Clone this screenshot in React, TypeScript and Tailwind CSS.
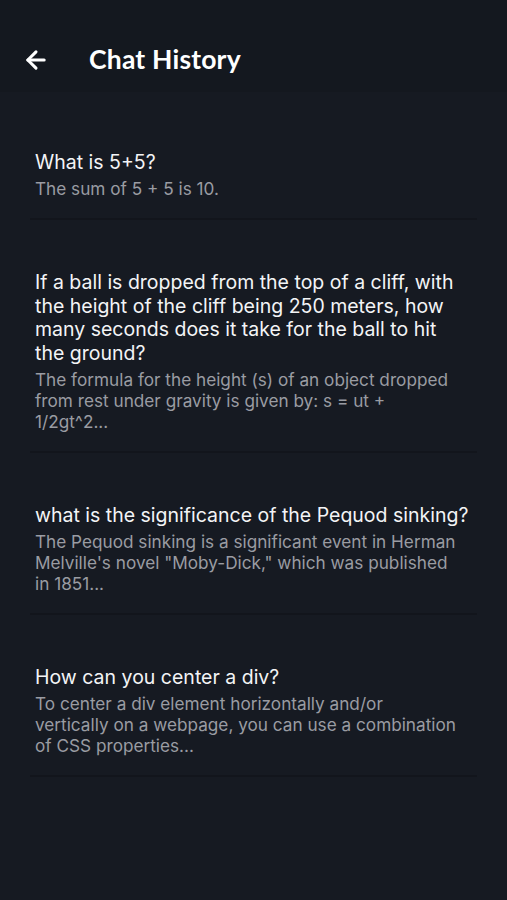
import { ArrowLeft } from "lucide-react";

interface ChatItem {
  question: string;
  answer: string;
}

const chats: ChatItem[] = [
  { question: "What is 5+5?", answer: "The sum of 5 + 5 is 10." },
  {
    question:
      "If a ball is dropped from the top of a cliff, with the height of the cliff being 250 meters, how many seconds does it take for the ball to hit the ground?",
    answer:
      "The formula for the height (s) of an object dropped from rest under gravity is given by: s = ut + 1/2gt^2...",
  },
  {
    question: "what is the significance of the Pequod sinking?",
    answer:
      'The Pequod sinking is a significant event in Herman Melville\'s novel "Moby-Dick," which was published in 1851...',
  },
  {
    question: "How can you center a div?",
    answer:
      "To center a div element horizontally and/or vertically on a webpage, you can use a combination of CSS properties...",
  },
];

export default function App() {
  return (
    <div className="min-h-[900px] bg-[#161a22] font-['Inter','Noto_Sans',sans-serif]">
      {/* header */}
      <div className="flex items-center h-[92px] bg-[#14181f] px-[22px] pt-[28px]">
        <div className="flex items-center h-[64px] -mt-[28px] pt-[28px]">
          <ArrowLeft className="w-[28px] h-[28px] text-white" strokeWidth={2.6} />
          <h1 className="ml-[39px] text-[26.5px] font-bold text-white font-['Lato',sans-serif] tracking-[0.2px]">
            Chat History
          </h1>
        </div>
      </div>

      <div className="pl-[30px] pr-[30px] pt-[8px]">
        {chats.map((chat, i) => (
          <div
            key={i}
            className="pt-[51px] pb-[19px] pl-[5px] border-b-2 border-[#12151c]"
          >
            <div className="w-[435px] text-[19.5px] leading-[23.5px] text-[#f3f4f6]">{chat.question}</div>
            <div className="w-[424.5px] mt-[3.5px] text-[17.2px] leading-[21px] text-[#9a9ca2]">{chat.answer}</div>
          </div>
        ))}
      </div>
    </div>
  );
}
